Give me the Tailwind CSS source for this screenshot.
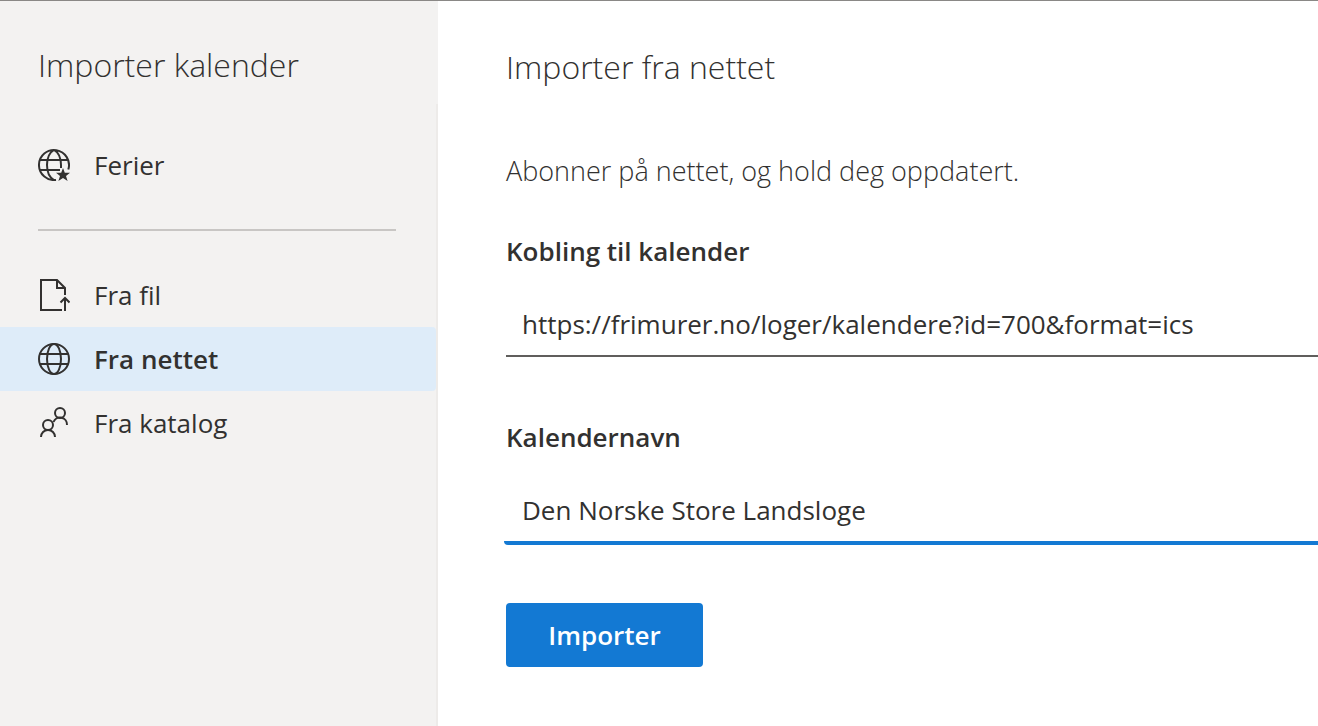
<!DOCTYPE html>
<html lang="nb">
<head>
<meta charset="utf-8">
<title>Importer kalender</title>
<script src="https://cdn.jsdelivr.net/npm/@tailwindcss/browser@4"></script>
</head>
<body class="flex min-h-screen border-t border-[#8a8886] bg-white font-['Open_Sans','Noto_Sans',sans-serif] text-[26px] leading-9 text-[#323130]">
  <aside class="flex w-[438px] shrink-0 flex-col bg-[#f3f2f1]">
    <h1 class="h-[103px] px-[38px] pt-10 text-[32px] leading-12 font-[350]">Importer kalender</h1>
    <nav class="flex grow flex-col border-r-2 border-[#edebe9] pt-[29px]">
      <a href="#ferier" class="flex h-16 items-center gap-6 pl-[38px]">
        <svg class="size-8 shrink-0" viewBox="0 0 32 32" fill="none" stroke="currentColor" stroke-width="2" aria-hidden="true">
          <path d="M18 30.9A15 15 0 1 1 30.3 20.5M2 11h28M2 21h20M16 1C11.500 3.500 9 9 9 16s2.500 12.500 7 15M16 1c4.500 2.500 7 8 7 15v3"/>
          <path d="M25 19l1.800 4.800H32l-4 3.200 1.600 5L25 29l-4.600 3 1.600-5-4-3.200h5.200z" fill="currentColor" stroke="none"/>
        </svg>
        <span>Ferier</span>
      </a>
      <hr class="mt-8 mr-10 mb-8 ml-[38px] border-t-2 border-[#c8c6c4]">
      <a href="#fil" class="flex h-16 items-center gap-6 pl-[38px]">
        <svg class="size-8 shrink-0" viewBox="0 0 32 32" fill="none" stroke="currentColor" stroke-width="2" aria-hidden="true">
          <path d="M24 31H3V1h16l8 8v7M19 1v8h8M27 32V19M22.500 23.500 27 19l4.500 4.500"/>
        </svg>
        <span>Fra fil</span>
      </a>
      <a href="#nettet" aria-current="page" class="flex h-16 items-center gap-6 rounded-r bg-[#deecf9] pl-[38px] font-semibold">
        <svg class="size-8 shrink-0" viewBox="0 0 32 32" fill="none" stroke="currentColor" stroke-width="2" aria-hidden="true">
          <circle cx="16" cy="16" r="15"/>
          <ellipse cx="16" cy="16" rx="7" ry="15"/>
          <path d="M2 11h28M2 21h28"/>
        </svg>
        <span>Fra nettet</span>
      </a>
      <a href="#katalog" class="flex h-16 items-center gap-6 pl-[38px]">
        <svg class="size-8 shrink-0" viewBox="0 0 32 32" fill="none" stroke="currentColor" stroke-width="2" aria-hidden="true">
          <circle cx="22" cy="6" r="5"/>
          <circle cx="10" cy="18" r="5"/>
          <path d="M3 30a7 7 0 0 1 14 0M15.500 15A7 7 0 0 1 29 18"/>
        </svg>
        <span>Fra katalog</span>
      </a>
    </nav>
  </aside>
  <main class="min-w-0 grow overflow-hidden pt-[42px] pl-[68px]">
    <h2 class="text-[32px] leading-12 font-[350]">Importer fra nettet</h2>
    <p class="mt-[62px] text-[27px] font-[350]">Abonner på nettet, og hold deg oppdatert.</p>
    <form>
      <label for="link" class="mt-11 block font-semibold">Kobling til kalender</label>
      <input id="link" type="url" value="https://frimurer.no/loger/kalendere?id=700&amp;format=ics" class="mt-6 block h-16 w-full border-b-2 border-[#605e5c] px-4 outline-none">
      <label for="name" class="mt-[62px] block font-semibold">Kalendernavn</label>
      <div class="-ml-0.5 mt-5 overflow-hidden rounded-l">
        <input id="name" type="text" value="Den Norske Store Landsloge" class="block h-[70px] w-full border-b-4 border-[#1379d3] px-[18px] pt-1 outline-none">
      </div>
      <button type="submit" class="mt-[58px] h-16 w-[197px] rounded bg-[#1379d3] font-semibold text-white">Importer</button>
    </form>
  </main>
</body>
</html>
